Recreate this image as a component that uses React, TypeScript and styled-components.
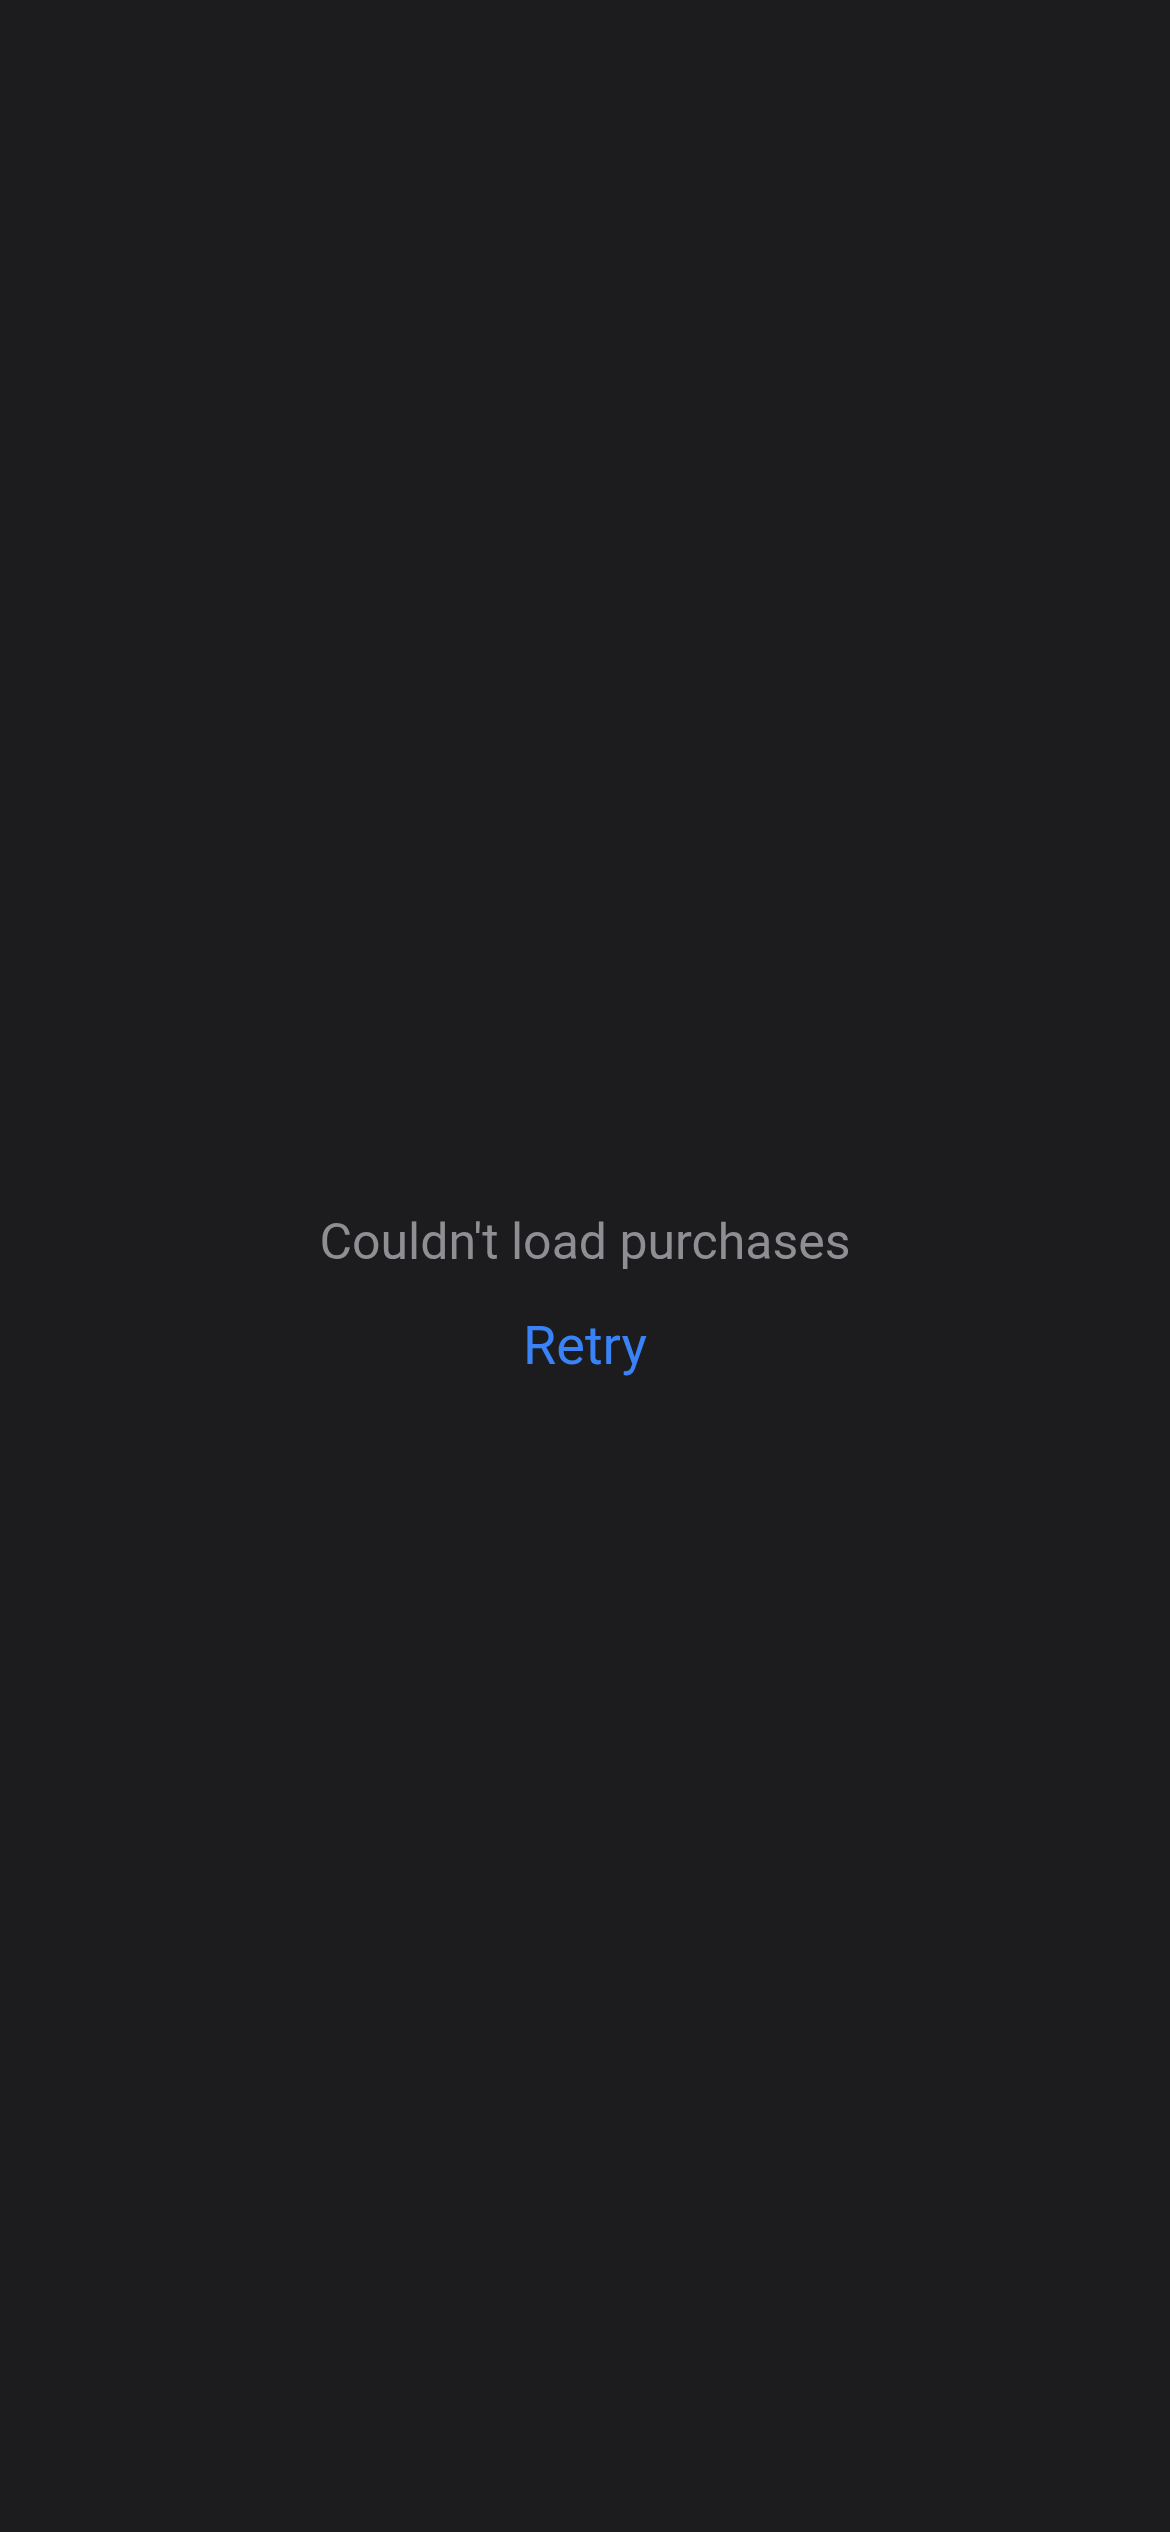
import React from "react";
import styled, { createGlobalStyle } from "styled-components";

const Global = createGlobalStyle`
  html, body { margin: 0; padding: 0; background: #1c1c1e; }
  #root { min-height: 100vh; }
`;

const Screen = styled.main`
  height: 2532px;
  width: 1170px;
  background: #1c1c1e;
  display: flex;
  flex-direction: column;
  align-items: center;
  justify-content: flex-start;
  padding-top: 1212px;
  box-sizing: border-box;
  font-family: Roboto, "Noto Sans", sans-serif;
`;

const Message = styled.p`
  margin: 0;
  color: #8e8e93;
  font-size: 50px;
  line-height: 60px;
  font-weight: 400;
`;

const RetryButton = styled.button`
  margin-top: 42px;
  background: none;
  border: none;
  padding: 0;
  color: #3a82f7;
  font-family: inherit;
  font-size: 54px;
  line-height: 64px;
  font-weight: 400;
  cursor: pointer;
`;

export default function App() {
  return (
    <>
      <Global />
      <Screen>
        <Message>Couldn't load purchases</Message>
        <RetryButton>Retry</RetryButton>
      </Screen>
    </>
  );
}
